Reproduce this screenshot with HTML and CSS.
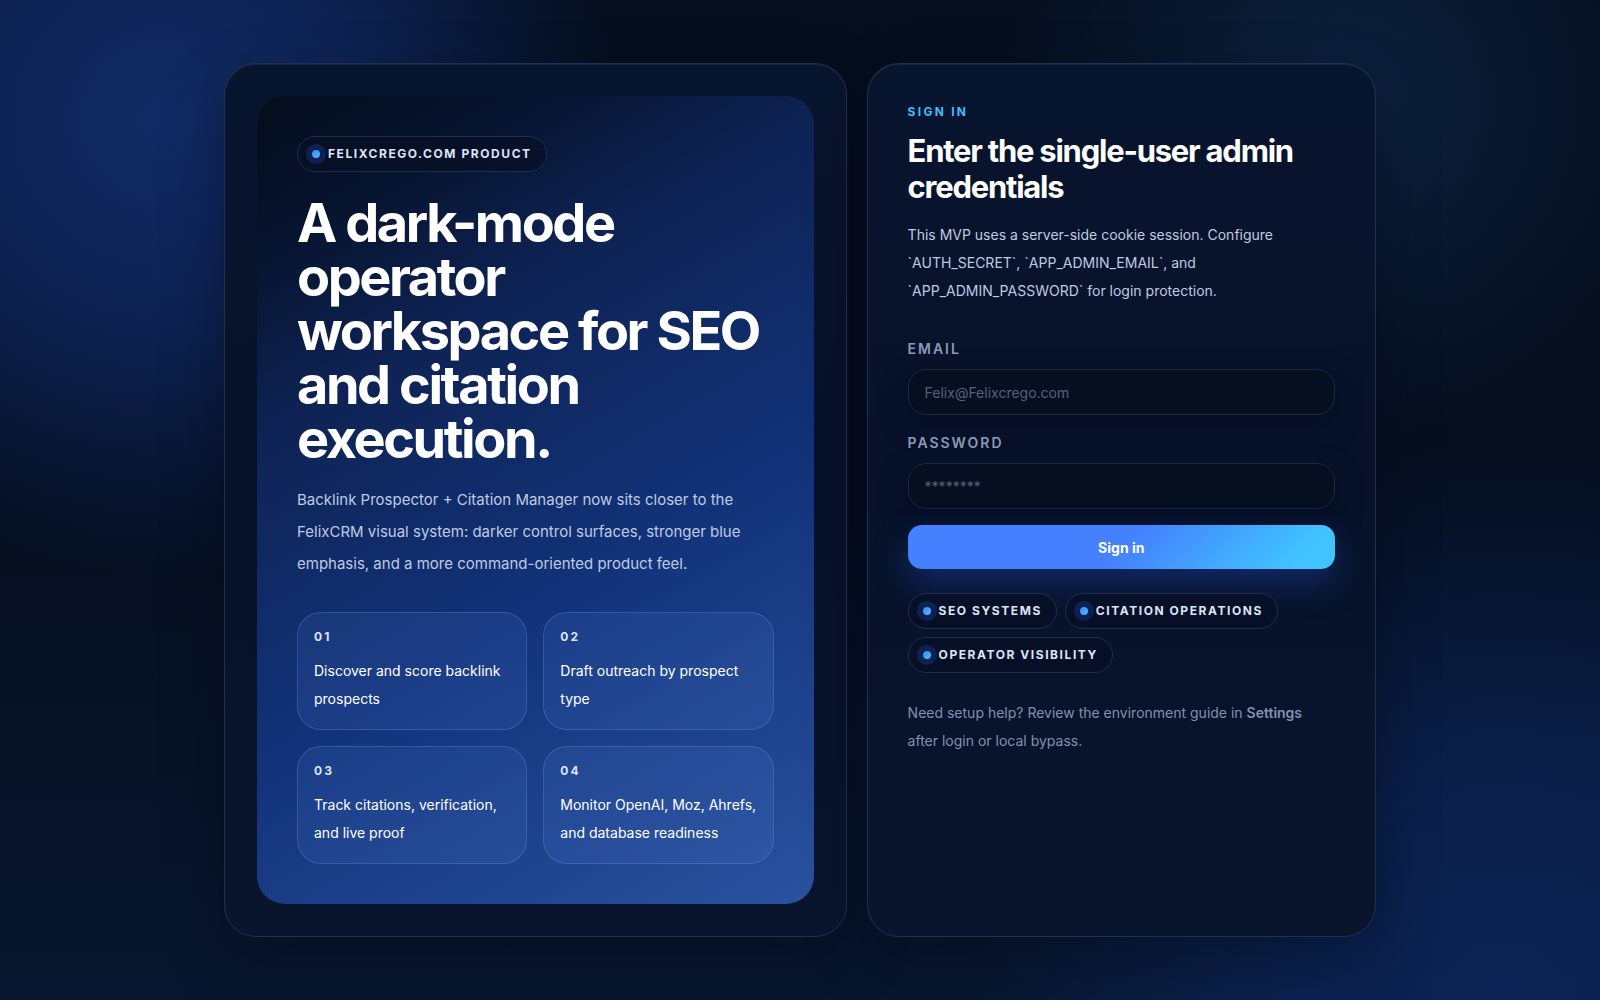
FILE: index.html
```
<!DOCTYPE html>
<html lang="en">
<head>
  <meta charset="UTF-8">
  <meta name="viewport" content="width=device-width, initial-scale=1.0">
  <title>Sign in</title>
  <link rel="stylesheet" href="styles.css">
</head>
<body>
  <main class="login">
    <section class="card intro">
      <div class="hero">
        <span class="pill">Felixcrego.com product</span>
        <h1>A dark-mode operator workspace for SEO and citation execution.</h1>
        <p class="lead">Backlink Prospector + Citation Manager now sits closer to the FelixCRM visual system: darker control surfaces, stronger blue emphasis, and a more command-oriented product feel.</p>
        <div class="features">
          <article class="feature">
            <span class="feature-number">01</span>
            <p>Discover and score backlink prospects</p>
          </article>
          <article class="feature">
            <span class="feature-number">02</span>
            <p>Draft outreach by prospect type</p>
          </article>
          <article class="feature">
            <span class="feature-number">03</span>
            <p>Track citations, verification, and live proof</p>
          </article>
          <article class="feature">
            <span class="feature-number">04</span>
            <p>Monitor OpenAI, Moz, Ahrefs, and database readiness</p>
          </article>
        </div>
      </div>
    </section>

    <section class="card signin">
      <p class="eyebrow">Sign in</p>
      <h2>Enter the single-user admin credentials</h2>
      <p class="note">This MVP uses a server-side cookie session. Configure `AUTH_SECRET`, `APP_ADMIN_EMAIL`, and `APP_ADMIN_PASSWORD` for login protection.</p>

      <form class="form">
        <div class="field">
          <label for="email">Email</label>
          <input type="email" id="email" name="email" placeholder="Felix@Felixcrego.com">
        </div>
        <div class="field">
          <label for="password">Password</label>
          <input type="password" id="password" name="password" placeholder="********">
        </div>
        <button type="submit">Sign in</button>
      </form>

      <div class="pills">
        <span class="pill">SEO systems</span>
        <span class="pill">Citation operations</span>
        <span class="pill">Operator visibility</span>
      </div>

      <p class="help">Need setup help? Review the environment guide in <strong>Settings</strong> after login or local bypass.</p>
    </section>
  </main>
</body>
</html>
```
FILE: styles.css
```
* {
  box-sizing: border-box;
}

body {
  margin: 0;
  min-height: 100vh;
  font-family: Inter, "Liberation Sans", sans-serif;
  color: #fff;
  background:
    radial-gradient(circle at 10% 12%, rgba(30, 80, 190, 0.44), rgba(30, 76, 190, 0.32) 12%, transparent 27%),
    radial-gradient(circle at 84% 10%, rgba(40, 110, 190, 0.2), transparent 21%),
    radial-gradient(circle at 94% 98%, rgba(20, 62, 165, 0.32), rgba(20, 62, 165, 0.26) 12%, transparent 30%),
    linear-gradient(180deg, #050e1e 0%, #050e1e 50%, #08172f 100%);
}

h1,
h2,
p {
  margin: 0;
}

.login {
  display: grid;
  grid-template-columns: 11fr 9fr;
  gap: 20px;
  align-content: center;
  max-width: 1200px;
  min-height: 100vh;
  margin: 0 auto;
  padding: 24px;
}

.card {
  border: 1px solid #20304e;
  border-radius: 32px;
  background: linear-gradient(180deg, #08152e, #07122a 45%, #08152c);
  box-shadow: 0 24px 60px rgba(2, 6, 18, 0.35), inset 0 1px 0 rgba(255, 255, 255, 0.08);
}

.intro {
  padding: 32px;
}

/* Blue panel inside the left card */
.hero {
  height: 100%;
  padding: 40px;
  border-radius: 28px;
  background: linear-gradient(150deg, #040c1b 0%, #07142f 14%, #0e2354 30%, #12337a 60%, #2a529f 100%);
}

.pill {
  display: inline-flex;
  align-items: center;
  gap: 8px;
  padding: 8px 14px;
  border: 1px solid #1c2e4e;
  border-radius: 18px;
  background: rgba(7, 15, 36, 0.75);
  color: #dbe6f8;
  font-size: 12px;
  font-weight: 700;
  line-height: 18px;
  letter-spacing: 0.13em;
  text-transform: uppercase;
}

.pill::before {
  content: "";
  width: 8px;
  height: 8px;
  border-radius: 50%;
  background: linear-gradient(135deg, #4580ff, #40c4ff);
  box-shadow: 0 0 0 6px rgba(37, 99, 235, 0.22);
}

h1 {
  margin-top: 24px;
  font-size: 54px;
  font-weight: 700;
  line-height: 54px;
  letter-spacing: -0.045em;
}

.lead {
  margin-top: 18px;
  color: #bfcbe2;
  font-size: 15px;
  line-height: 32px;
}

.features {
  display: grid;
  grid-template-columns: 1fr 1fr;
  gap: 16px;
  margin-top: 32px;
}

.feature {
  padding: 16px;
  border: 1px solid rgba(160, 190, 255, 0.2);
  border-radius: 24px;
  background: rgba(110, 160, 255, 0.1);
  font-size: 14px;
  line-height: 28px;
}

.feature-number {
  display: block;
  margin-bottom: 12px;
  color: #dbe6f8;
  font-size: 12px;
  font-weight: 700;
  line-height: 16px;
  letter-spacing: 0.18em;
}

.signin {
  padding: 40px;
}

.eyebrow {
  color: #40bcff;
  font-size: 12px;
  font-weight: 700;
  line-height: 16px;
  letter-spacing: 0.19em;
  text-transform: uppercase;
}

h2 {
  margin-top: 13px;
  font-size: 31px;
  font-weight: 700;
  line-height: 36px;
  letter-spacing: -0.04em;
}

.note {
  margin-top: 16px;
  color: #bfcbe2;
  font-size: 14px;
  line-height: 28px;
}

.form {
  display: grid;
  gap: 16px;
  margin-top: 32px;
}

.field {
  display: grid;
  gap: 8px;
}

label {
  color: #8a9bbd;
  font-size: 14px;
  font-weight: 600;
  line-height: 24px;
  letter-spacing: 0.14em;
  text-transform: uppercase;
}

input {
  width: 100%;
  height: 46px;
  padding: 0 16px;
  border: 1px solid #182846;
  border-radius: 18px;
  background: #060f20;
  box-shadow: 0 10px 30px rgba(2, 6, 18, 0.4);
  color: #fff;
  font: inherit;
  font-size: 14px;
}

input::placeholder {
  color: #52617f;
}

button {
  height: 44px;
  border: 0;
  border-radius: 14px;
  background: linear-gradient(135deg, #4580ff 0%, #4580ff 50%, #40c4ff 90%);
  box-shadow: 0 14px 34px rgba(37, 84, 220, 0.35);
  color: #fff;
  font: inherit;
  font-size: 14px;
  font-weight: 700;
  cursor: pointer;
}

.pills {
  display: flex;
  flex-wrap: wrap;
  gap: 8px;
  margin-top: 24px;
}

.help {
  margin-top: 26px;
  color: #8091b3;
  font-size: 14px;
  line-height: 28px;
}

.help strong {
  font-weight: 600;
}

@media (max-width: 900px) {
  .login {
    grid-template-columns: 1fr;
  }
}
```
